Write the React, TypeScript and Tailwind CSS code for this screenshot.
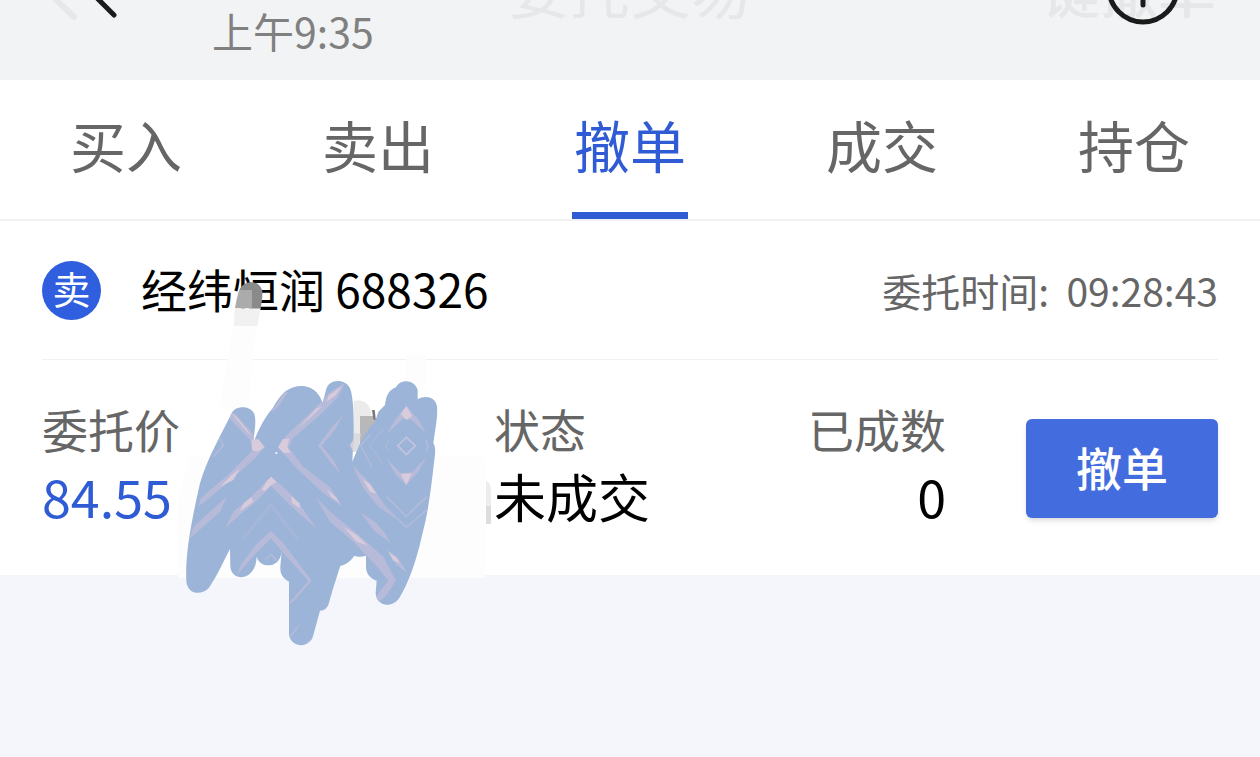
const TABS = ["买入", "卖出", "撤单", "成交", "持仓"];

const INK_SHAPE =
  "M185 160 C195 137 238 135 252 160 C260 178 254 215 249 250 C268 205 285 170 308 145 C328 108 345 90 370 82 C405 70 442 82 458 128 L468 90 C475 56 525 54 540 85 C550 110 551 160 551 220 L547 305 L570 250 C580 225 600 200 615 185 L625 155 L645 135 C648 110 655 90 678 82 C690 55 735 58 743 90 L743 118 C765 105 797 110 801 140 C804 170 795 210 790 250 C798 262 796 280 793 300 C785 370 775 460 755 530 C740 600 715 670 690 710 C670 745 620 742 617 700 L620 662 C600 655 588 640 588 620 L588 587 C575 592 560 590 553 587 C545 600 530 613 511 618 C500 650 485 700 475 735 C468 748 460 752 450 752 L430 825 C420 866 365 865 357 825 L357 665 C340 655 330 645 331 620 L335 575 C330 627 270 627 260 590 C258 665 185 667 181 620 L180 567 C160 605 140 650 117 683 C95 707 55 705 49 665 C45 580 65 480 90 370 C110 300 150 230 185 160Z";

function BackChevrons() {
  return (
    <svg className="h-20 w-32" viewBox="0 0 128 80" fill="none" strokeLinecap="round" strokeWidth="5" aria-hidden>
      <path d="M100 3 L48 44 L74 69" className="stroke-[#e6e7e9]" strokeWidth="6" />
      <path d="M114 19 L89 44 L114 67" className="stroke-none" />
      <path d="M114 21 L91 44 L114 67" className="stroke-[#1a1c1c]" />
    </svg>
  );
}

function Scribble() {
  return (
    <svg
      className="pointer-events-none absolute left-[170px] top-[49px] h-[390px] w-[340px]"
      viewBox="0 -270 1020 1170"
      aria-hidden
    >
      {/* rubbed out areas */}
      <path d="M195 -155 C200 -185 204 -200 208 -210 H246 V-155Z" fill="#ababab" />
      <path d="M208 -210 C222 -242 272 -242 277 -205 C278 -190 275 -170 272 -155 H246 V-210Z" fill="#8a8a8a" />
      <path d="M195 -155 H272 L262 -102 H191Z" fill="#f1f1f1" />
      <path d="M191 -102 H262 L247 -12 L242 60 L236 150 H150 L170 0Z" fill="#fdfdfd" />
      <path d="M706 -10 C710 -25 765 -25 770 -10 V80 H706Z" fill="#fdfdfd" />
      <path d="M20 440 L60 290 H945 V654 H24Z" fill="#fdfdfe" />
      <path d="M551 124 C575 114 598 130 605 160 L590 275 H547Z" fill="#ebebeb" />
      <path d="M570 168 H608 L618 185 L590 225 L570 265Z" fill="#b8b8b8" />
      <path d="M547 220 H572 L565 275 H547Z" fill="#dcdcdc" />
      <path d="M606 150 H614 L618 182 L610 178Z" fill="#777" />
      <path d="M948 362 C958 366 963 375 963 390 V438 H948Z" fill="#ededed" />
      <path d="M948 438 H963 V492 H948Z" fill="#dddddd" />

      <clipPath id="ink">
        <path d={INK_SHAPE} />
      </clipPath>
      <path d={INK_SHAPE} fill="#9bb4d7" />
      <g clipPath="url(#ink)">
        <g fill="#b7bad8">
          <path d="M175 150 L196 162 L245 215 L260 240 L284 262 L250 300 L150 388 L85 440 L92 415 L180 340 L246 272 L240 240 L182 180Z" />
          <path d="M525 68 L505 110 L450 165 L368 236 L356 262 L400 320 L480 382 L518 440 L460 400 L380 325 L324 262 L350 225 L430 150 L478 98Z" />
          <path d="M172 408 L150 455 L100 500 L60 535 L70 500 L120 455Z" />
          <path d="M303 350 L348 388 L388 430 L415 470 L442 508 L386 460 L350 425 L303 378 L258 425 L215 460 L165 505 L190 455 L245 408Z" />
          <path d="M436 410 L480 455 L560 520 L640 590 L678 662 L650 705 L610 740 L625 700 L655 662 L625 625 L550 545 L480 485Z" />
          <path d="M547 315 L600 370 L640 430 L680 478 L625 440 L580 385Z" />
          <path d="M570 455 L620 490 L645 520 L662 548 L615 515Z" />
          <path d="M650 568 L685 595 L712 640 L680 615Z" />
          <path d="M303 512 L345 555 L425 662 L370 725 L352 735 L415 662 L345 585 L303 535 L258 580 L200 645 L215 610 L262 550Z" />
          <path d="M709 138 L745 178 L768 220 L725 180 L700 176 L650 222 L675 180Z" />
          <path d="M650 296 L692 338 L725 338 L770 290 L745 335 L709 375 L678 345Z" />
          <path d="M518 166 L495 210 L455 257 L490 300 L514 345 L480 305 L444 257 L480 208Z" />
          <path d="M340 100 L355 95 L325 140 L303 158Z" />
        </g>
        <g fill="#d8cbdc">
          <path d="M185 160 L200 172 L244 226 L230 215Z" />
          <path d="M245 240 L266 238 L284 262 L262 275 L246 270Z" />
          <path d="M338 238 L358 235 L352 262 L362 278 L340 278 L324 262Z" />
          <path d="M475 108 L515 78 L498 105 L470 125Z" />
          <path d="M455 140 L415 178 L385 205 L440 145Z" />
          <path d="M185 345 L210 325 L190 360 L150 380Z" />
          <path d="M290 364 L303 350 L320 366 L303 376 L285 392 L275 390Z" />
          <path d="M365 408 L388 430 L390 445 L365 428Z" />
          <path d="M250 425 L243 412 L222 430 L208 455Z" />
          <path d="M470 388 L498 412 L508 428 L485 412Z" />
          <path d="M520 500 L560 525 L595 558 L560 545Z" />
          <path d="M692 162 L709 138 L727 168 L709 180Z" />
          <path d="M692 342 L726 340 L709 375Z" />
          <path d="M578 357 L600 372 L620 402 L600 395Z" />
          <path d="M655 575 L678 592 L690 610 L670 602Z" />
          <path d="M540 255 L549 240 V275Z" />
        </g>
        <g fill="none" stroke="#b2bbdb" strokeWidth="5">
          <path d="M709 232 L736 257 L709 284 L683 257Z" stroke="#c3c3df" />
          <path d="M657 240 L647 257 L657 274" strokeWidth="3" />
          <path d="M640 205 L599 257 L640 312" strokeWidth="3" />
          <path d="M600 225 L572 257 L605 320" strokeWidth="4" />
          <path d="M650 410 L709 470 L770 410" />
          <path d="M640 435 L709 502 L775 445" strokeWidth="4" />
          <path d="M220 535 L303 435 L385 540" strokeWidth="10" stroke="#a5b6d8" />
          <path d="M285 600 L303 584 L322 602" />
          <path d="M130 290 L160 257 L145 225" />
          <path d="M360 830 L388 795" />
          <path d="M408 850 L430 835" />
          <path d="M768 240 L774 257 L768 274" />
        </g>
        <circle cx="319" cy="279" r="3" fill="#fff" />
      </g>
    </svg>
  );
}

export default function App() {
  return (
    <div className="min-h-screen bg-[#f4f6fb] font-['Noto_Sans_CJK_SC',sans-serif] text-black">
      <header className="relative h-20 overflow-hidden bg-[#f2f3f5]">
        <div className="-mt-13 grid h-20 grid-cols-3 items-center">
          <button type="button" aria-label="返回" className="justify-self-start">
            <BackChevrons />
          </button>
          <h1 className="justify-self-center whitespace-nowrap text-[61px] leading-20 text-[#e6e7e9]">委托交易</h1>
          <div className="relative mr-11 justify-self-end">
            <span className="whitespace-nowrap text-[58px] font-medium leading-20 text-[#e6e7e9]">一键撤单</span>
            <button type="button" aria-label="添加" className="absolute right-9 top-1">
              <svg className="size-[74px]" viewBox="0 0 74 74" fill="none" stroke="#1a1c1c" strokeWidth="5" strokeLinecap="round">
                <circle cx="37" cy="36" r="34" />
                <path d="M37 19 V53 M20 36 H54" />
              </svg>
            </button>
          </div>
        </div>
        <time className="absolute left-[212px] top-1.5 text-[41px] leading-12 text-[#808080]">上午9:35</time>
      </header>

      <nav className="grid grid-cols-5 border-b-2 border-[#f1f1f2] bg-white">
        {TABS.map((tab) => (
          <button
            key={tab}
            type="button"
            className={
              tab === "撤单"
                ? "flex flex-col items-center text-[#2f5cd5]"
                : "flex flex-col items-center text-[#666]"
            }
          >
            <span className="pb-1 text-[56px] leading-32">{tab}</span>
            <span className={tab === "撤单" ? "h-[7px] w-[116px] bg-[#2f5cd5]" : "h-[7px] w-[116px]"} />
          </button>
        ))}
      </nav>

      <main className="relative bg-white px-[42px]">
        <div className="flex h-[139px] items-center border-b border-[#f1f1f1]">
          <span className="flex size-[59px] shrink-0 items-center justify-center rounded-full bg-[#2f5fde] pb-1 text-[38px] leading-none text-white">
            卖
          </span>
          <h2 className="ml-10 pb-1 text-[46px] leading-16">经纬恒润 688326</h2>
          <p className="ml-auto whitespace-pre text-[39px] leading-16 text-[#666]">委托时间:  09:28:43</p>
        </div>

        <div className="flex items-center gap-20 pb-[43px] pt-9">
          <dl className="grid flex-1 grid-cols-2">
            <div>
              <dt className="text-[46px] leading-16 text-[#666]">委托价</dt>
              <dd className="text-[52px] leading-18 text-[#2f5cd5]">84.55</dd>
            </div>
            <div className="flex justify-between">
              <div>
                <dt className="text-[46px] leading-16 text-[#666]">状态</dt>
                <dd className="text-[52px] leading-18">未成交</dd>
              </div>
              <div className="text-right">
                <dt className="text-[46px] leading-16 text-[#666]">已成数</dt>
                <dd className="text-[52px] leading-18">0</dd>
              </div>
            </div>
          </dl>
          <button
            type="button"
            className="mt-2 h-[99px] w-48 rounded-md bg-[#436ddf] pb-1 text-[46px] font-medium leading-16 text-white shadow-md"
          >
            撤单
          </button>
        </div>
        <Scribble />
      </main>
    </div>
  );
}
